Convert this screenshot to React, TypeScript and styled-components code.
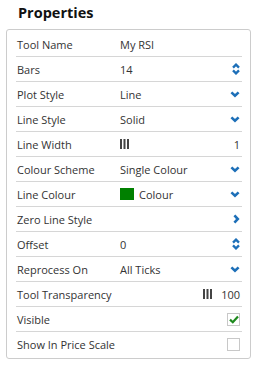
import React from 'react'
import styled, { createGlobalStyle } from 'styled-components'

const GlobalStyle = createGlobalStyle`
    body {
        margin: 0;
        background: #ffffff;
        font-family: 'Open Sans', 'Noto Sans', sans-serif;
        color: #333333;
    }
`

const Blue = '#1d6fb8'

type Control = 'spin' | 'select' | 'arrow' | 'width' | 'check' | 'none'

interface RowData {
    label: string
    value?: string
    control: Control
    swatch?: string
    bars?: boolean
    checked?: boolean
}

const rows: RowData[] = [
    { label: 'Tool Name', value: 'My RSI', control: 'none' },
    { label: 'Bars', value: '14', control: 'spin' },
    { label: 'Plot Style', value: 'Line', control: 'select' },
    { label: 'Line Style', value: 'Solid', control: 'select' },
    { label: 'Line Width', value: '1', control: 'width' },
    { label: 'Colour Scheme', value: 'Single Colour', control: 'select' },
    { label: 'Line Colour', value: 'Colour', control: 'select', swatch: '#008000' },
    { label: 'Zero Line Style', control: 'arrow' },
    { label: 'Offset', value: '0', control: 'spin' },
    { label: 'Reprocess On', value: 'All Ticks', control: 'select' },
    { label: 'Tool Transparency', value: '100', control: 'width', bars: true },
    { label: 'Visible', control: 'check', checked: true },
    { label: 'Show In Price Scale', control: 'check', checked: false },
]

const ChevronDown = () => (
    <svg width='10' height='7' viewBox='0 0 10 7'>
        <path d='M1.4 1.4 L5 4.8 L8.6 1.4' fill='none' stroke={Blue} strokeWidth='2.6' />
    </svg>
)

const ChevronRight = () => (
    <svg width='7' height='10' viewBox='0 0 7 10'>
        <path d='M1.4 1.4 L4.8 5 L1.4 8.6' fill='none' stroke={Blue} strokeWidth='2.6' />
    </svg>
)

const Spinner = () => (
    <svg width='8' height='12' viewBox='0 0 8 12'>
        <path d='M1 4.6 L4 1.6 L7 4.6' fill='none' stroke={Blue} strokeWidth='2.3' />
        <path d='M1 7.4 L4 10.4 L7 7.4' fill='none' stroke={Blue} strokeWidth='2.3' />
    </svg>
)

const WidthIcon = () => (
    <svg width='9' height='10' viewBox='0 0 9 10'>
        <rect x='0' y='0' width='2' height='10' fill='#444' />
        <rect x='3.5' y='0' width='2' height='10' fill='#444' />
        <rect x='7' y='0' width='2' height='10' fill='#444' />
    </svg>
)

const Tick = () => (
    <svg width='10' height='9' viewBox='0 0 10 9'>
        <path d='M1 4.6 L3.8 7.2 L9 1.4' fill='none' stroke='#1e8a1e' strokeWidth='2.2' />
    </svg>
)

const PropRow = ({ row, last }: { row: RowData; last: boolean }) => {
    const trailing = () => {
        switch (row.control) {
            case 'spin':
                return <Spinner />
            case 'select':
                return <ChevronDown />
            case 'arrow':
                return <ChevronRight />
            case 'check':
                return <CheckBox>{row.checked && <Tick />}</CheckBox>
            case 'width':
                return row.bars ? (
                    <Inline>
                        <WidthIcon />
                        <span>{row.value}</span>
                    </Inline>
                ) : (
                    <span>{row.value}</span>
                )
            default:
                return null
        }
    }
    const showValue = row.control !== 'width' || !row.bars
    return (
        <Row last={last}>
            <Label>{row.label}</Label>
            <Value>
                {row.swatch && <Swatch color={row.swatch} />}
                {row.control === 'width' && !row.bars ? <WidthIcon /> : showValue && row.value}
            </Value>
            <Trailing>{trailing()}</Trailing>
        </Row>
    )
}

const App = () => {
    return (
        <Page>
            <GlobalStyle />
            <Title>Properties</Title>
            <Panel>
                {rows.map((r, i) => (
                    <PropRow key={r.label} row={r} last={i === rows.length - 1} />
                ))}
            </Panel>
        </Page>
    )
}

interface StyledProps {
    last?: boolean
    color?: string
}

const Page = styled.div`
    width: 258px;
    padding: 0 7px 0 6px;
    box-sizing: border-box;
`
const Title = styled.h1`
    margin: 0 0 0 12px;
    padding-top: 1px;
    font-size: 14.5px;
    line-height: 24px;
    font-weight: 700;
    color: #111111;
    height: 28px;
`
const Panel = styled.div`
    border: 1px solid #cccccc;
    border-radius: 3px;
    padding: 2px 8px 1px 9px;
`
const Row = styled.div<StyledProps>`
    display: grid;
    grid-template-columns: 103px 1fr auto;
    align-items: center;
    height: 25px;
    box-sizing: border-box;
    padding: 0 2px 0 1px;
    font-size: 11px;
    border-bottom: ${(props) => (props.last ? 'none' : '1px solid #d6d6d6')};
`
const Label = styled.span`
    white-space: nowrap;
`
const Value = styled.span`
    display: flex;
    align-items: center;
    gap: 5px;
    white-space: nowrap;
`
const Trailing = styled.span`
    display: flex;
    align-items: center;
    justify-content: flex-end;
`
const Inline = styled.span`
    display: flex;
    align-items: center;
    gap: 9px;
`
const Swatch = styled.span<StyledProps>`
    width: 14px;
    height: 12px;
    background: ${(props) => props.color};
    display: inline-block;
`
const CheckBox = styled.span`
    width: 11px;
    height: 11px;
    border: 1px solid #c8c8c8;
    background: #ffffff;
    display: flex;
    align-items: center;
    justify-content: center;
`

export default App
